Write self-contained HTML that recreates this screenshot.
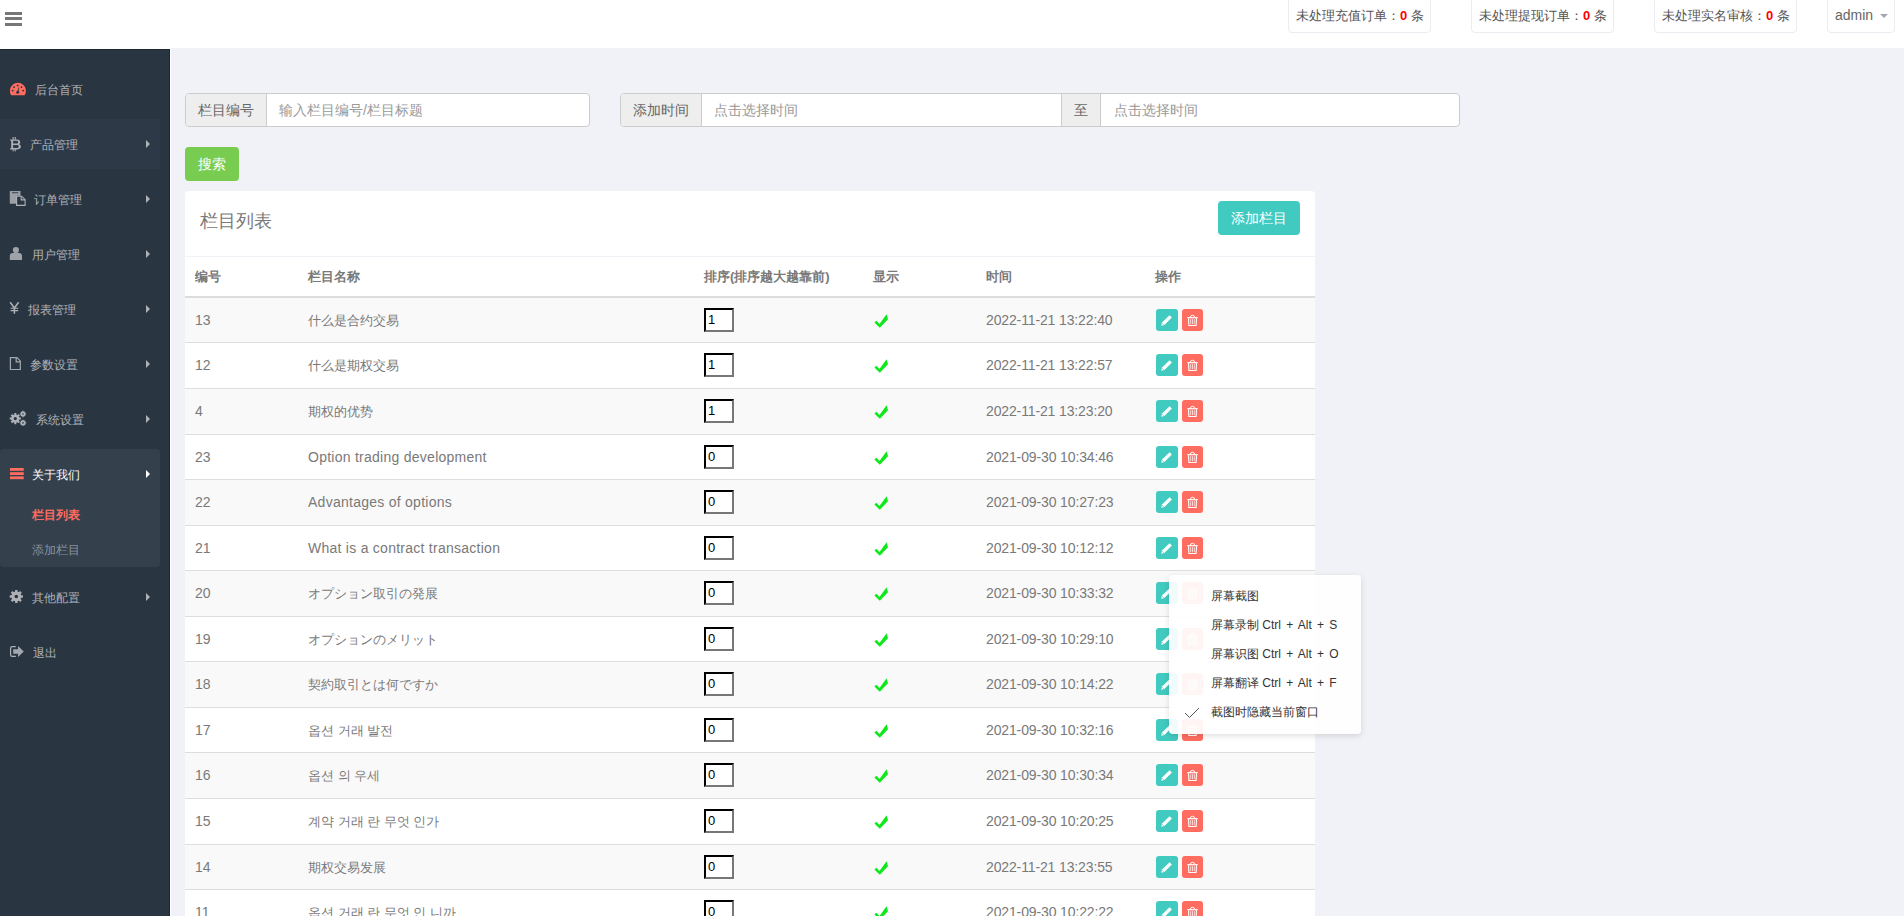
<!DOCTYPE html>
<html><head><meta charset="utf-8">
<style>
*{box-sizing:border-box}
html,body{margin:0;padding:0}
body{width:1904px;height:916px;overflow:hidden;position:relative;background:#f1f2f7;font-family:"Liberation Sans",sans-serif;color:#797979;font-size:14px}
.abs{position:absolute}
#hdr{position:absolute;left:0;top:0;width:1904px;height:48px;background:#fff}
.bar{position:absolute;left:5px;width:17px;height:3px;background:#777}
.stat{position:absolute;top:-5px;height:38px;border:1px solid #ebebf2;border-radius:4px;background:#fff;font-size:13px;color:#555;white-space:nowrap}
.stat span.t{position:absolute;left:7px;top:13px;line-height:14px}
.stat b{color:#f00;font-weight:bold}
#side{position:absolute;left:0;top:49px;width:170px;height:867px;background:#2a3542;border-top:1px solid #1e2833;border-right:1px solid #1e2833}
#wl{position:absolute;left:170px;top:48px;width:1px;height:868px;background:#fff}
.mi{position:absolute;left:0;width:160px;height:49px;color:#aeb2b7;font-size:12px;white-space:nowrap}
.mi .tx{position:absolute;top:20px;line-height:13px}
.mi .ar{position:absolute;left:146px;top:21px;width:0;height:0;border-left:4.4px solid #aeb2b7;border-top:4px solid transparent;border-bottom:4px solid transparent}
.mi svg{position:absolute}
.ig{position:absolute;top:93px;height:34px;border:1px solid #cccccc;border-radius:4px;background:#fff;font-size:14px;white-space:nowrap}
.addon{position:absolute;top:0;height:32px;background:#eee;color:#666;line-height:32px;text-align:center}
.ph{position:absolute;top:0;line-height:32px;color:#999}
.btn{position:absolute;height:34px;border-radius:4px;color:#fff;font-size:14px;line-height:34px;text-align:center}
#panel{position:absolute;left:185px;top:191px;width:1130px;height:800px;background:#fff;border-radius:4px}
.th{position:absolute;top:79px;font-weight:bold;font-size:13px;line-height:14px;color:#797979}
.tr{position:absolute;left:0;width:1130px;height:45.58px}
.stripe{position:absolute;left:0;width:1130px}
.hl{position:absolute;left:0;width:1130px;height:1px;background:#ddd}
.td{position:absolute;top:13px;line-height:18px;white-space:nowrap}
.sort{position:absolute;left:519px;top:10px;width:29.5px;height:23.5px;border:2px inset #767676;border-top-color:#000;border-left-color:#000;border-right-color:#777;border-bottom-color:#777;background:#fff;color:#000;font-size:13px;line-height:19px;padding-left:2px}
.chk{position:absolute;left:689px;top:16px;width:15px;height:14px}
.chk svg{display:block}
.be,.bd{position:absolute;top:11px;height:22px;border-radius:3px}
.be{left:971px;width:22px;background:#41cac0}
.bd{left:997px;width:21px;background:#ff6c60}
.be svg,.bd svg{position:absolute;left:0;top:0}
#cm{position:absolute;left:1169px;top:575px;width:192px;height:159px;background:rgba(255,255,255,0.93);border-radius:4px;box-shadow:0 2px 6px rgba(0,0,0,0.13);font-size:12px;color:#333;white-space:nowrap}
#cm .it{position:absolute;left:42px;line-height:14px}
#cm .it i{font-style:normal;word-spacing:1.9px}
</style></head><body>
<div id="hdr">
 <div class="bar" style="top:12px"></div><div class="bar" style="top:17px"></div><div class="bar" style="top:23px"></div>
 <div class="stat" style="left:1288px;width:143px"><span class="t">未处理充值订单：<b>0</b> 条</span></div>
 <div class="stat" style="left:1471px;width:143px"><span class="t">未处理提现订单：<b>0</b> 条</span></div>
 <div class="stat" style="left:1654px;width:143px"><span class="t">未处理实名审核：<b>0</b> 条</span></div>
 <div class="stat" style="left:1827px;width:68px"><span class="t" style="font-size:14px;top:12px;color:#666">admin</span><span class="abs" style="left:52px;top:18px;width:0;height:0;border-top:4px solid #a4a7b0;border-left:4px solid transparent;border-right:4px solid transparent"></span></div>
</div>
<div id="wl"></div><div class="abs" style="left:0;top:48px;width:171px;height:1px;background:#fff"></div>
<div id="side">
 <!-- items -->
 <div class="mi" style="top:14px"><span class="tx" style="left:35px">后台首页</span></div>
 <div class="mi" style="top:69px;height:50px;background:#2e3947"><span class="tx" style="left:30px">产品管理</span><span class="ar"></span></div>
 <div class="mi" style="top:124px"><span class="tx" style="left:34px">订单管理</span><span class="ar"></span></div>
 <div class="mi" style="top:179px"><span class="tx" style="left:32px">用户管理</span><span class="ar"></span></div>
 <div class="mi" style="top:234px"><span class="tx" style="left:28px">报表管理</span><span class="ar"></span></div>
 <div class="mi" style="top:289px"><span class="tx" style="left:30px">参数设置</span><span class="ar"></span></div>
 <div class="mi" style="top:344px"><span class="tx" style="left:36px">系统设置</span><span class="ar"></span></div>
 <div class="abs" style="left:0;top:399px;width:160px;height:118px;background:#35404d;border-radius:4px"></div>
 <div class="mi" style="top:399px;color:#fff"><span class="tx" style="left:32px">关于我们</span><span class="ar" style="border-left-color:#fff"></span></div>
 <div class="mi" style="top:447px;height:35px;color:#ff6c60"><span class="tx" style="left:32px;top:12px;font-weight:bold">栏目列表</span></div>
 <div class="mi" style="top:482px;height:35px;color:#8a9099"><span class="tx" style="left:32px;top:12px">添加栏目</span></div>
 <div class="mi" style="top:522px"><span class="tx" style="left:32px">其他配置</span><span class="ar"></span></div>
 <div class="mi" style="top:577px"><span class="tx" style="left:33px">退出</span></div>
</div>
<svg class="abs" style="left:0;top:0" width="170" height="700" viewBox="0 0 170 700">
 <!-- dashboard -->
 <path d="M11.2 95.2 A8 8 0 1 1 24.6 95.2 Z" fill="#ff6c60"/>
 <g fill="#2a3542"><circle cx="12.6" cy="90.6" r="0.95"/><circle cx="14.1" cy="87.1" r="0.95"/><circle cx="17.7" cy="85.4" r="0.95"/><circle cx="21.5" cy="87.1" r="0.95"/><circle cx="23.2" cy="90.6" r="0.95"/><circle cx="17.7" cy="92.3" r="1.5"/><path d="M17.1 92.2 L18.6 87.4 L19.2 87.6 L18.3 92.4 Z"/></g>
 <!-- bitcoin -->
 <g fill="#aeb2b7"><path d="M10 139.4 H16.8 C19.6 139.4 20.2 141 20.2 142.2 C20.2 143.3 19.5 143.9 18.8 144.2 C19.9 144.5 20.9 145.3 20.9 146.6 C20.9 148.2 19.8 149.4 17.2 149.4 H10 V148.3 H11.2 V140.5 H10 Z M13.1 140.8 V143.6 H16.5 C17.8 143.6 18.2 143 18.2 142.2 C18.2 141.4 17.8 140.8 16.5 140.8 Z M13.1 145 V148 H16.8 C18.2 148 18.8 147.3 18.8 146.5 C18.8 145.6 18.2 145 16.8 145 Z"/><rect x="12.6" y="137" width="1.1" height="2.6"/><rect x="14.7" y="137" width="1.1" height="2.6"/><rect x="12.6" y="149.2" width="1.1" height="2.1"/><rect x="14.7" y="149.2" width="1.1" height="2.1"/></g>
 <!-- files-o -->
 <path d="M9.8 191 H20.5 V196 L16.8 195.6 L16.8 203.8 H9.8 Z" fill="#9ba0a7"/>
 <rect x="12" y="192.3" width="6.2" height="0.9" fill="#2a3542"/>
 <path d="M16.6 196.2 H21.6 L25.1 199.7 V205.4 H16.6 Z" fill="none" stroke="#aeb2b7" stroke-width="1.1"/>
 <path d="M21.2 196.3 V199.9 H25" fill="none" stroke="#aeb2b7" stroke-width="1.1"/>
 <!-- user -->
 <g fill="#9ea3aa"><circle cx="15.9" cy="250" r="3.1"/><path d="M9.8 260 V256 C9.8 254 11 253 12.6 253 H19.2 C20.8 253 22 254 22 256 V260 Z"/></g>
 <!-- yen -->
 <g fill="none" stroke="#aeb2b7" stroke-width="1.5"><path d="M10.2 302.2 L14.4 308 L18.6 302.2"/><path d="M14.4 307.5 V313.8"/><path d="M10.6 308.3 H18.2 M10.6 310.6 H18.2" stroke-width="1.1"/></g>
 <!-- file-o -->
 <path d="M10.4 357.6 H17 L20.3 360.9 V369.5 H10.4 Z" fill="none" stroke="#a3a8ae" stroke-width="1.2"/>
 <path d="M16.2 357.8 V361.8 H20.2" fill="none" stroke="#a3a8ae" stroke-width="1.2"/>
 <!-- cogs -->
 <g fill="#aeb2b7">
  <circle cx="15.3" cy="418.6" r="4.2"/>
  <g stroke="#aeb2b7" stroke-width="2"><path d="M15.3 413 V424.2 M9.7 418.6 H20.9 M11.4 414.7 L19.2 422.5 M19.2 414.7 L11.4 422.5"/></g>
  <circle cx="23" cy="414" r="2.4"/><g stroke="#aeb2b7" stroke-width="1.2"><path d="M23 410.8 V417.2 M19.8 414 H26.2 M20.8 411.8 L25.2 416.2 M25.2 411.8 L20.8 416.2"/></g>
  <circle cx="23" cy="422.9" r="2.4"/><g stroke="#aeb2b7" stroke-width="1.2"><path d="M23 419.7 V426.1 M19.8 422.9 H26.2 M20.8 420.7 L25.2 425.1 M25.2 420.7 L20.8 425.1"/></g>
 </g>
 <g fill="#2a3542"><circle cx="15.3" cy="418.6" r="1.6"/><circle cx="23" cy="414" r="0.8"/><circle cx="23" cy="422.9" r="0.8"/></g>
 <!-- bars red -->
 <g fill="#ff6c60"><rect x="10" y="468" width="13.7" height="2.8"/><rect x="10" y="472.2" width="13.7" height="2.8"/><rect x="10" y="476.4" width="13.7" height="2.8"/></g>
 <!-- cog -->
 <circle cx="16.3" cy="596.5" r="4.9" fill="#aeb2b7"/>
 <g stroke="#aeb2b7" stroke-width="2.4"><path d="M16.3 589.9 V603.1 M9.7 596.5 H22.9 M11.6 591.8 L21 601.2 M21 591.8 L11.6 601.2"/></g>
 <circle cx="16.3" cy="596.5" r="1.8" fill="#2a3542"/>
 <!-- sign-out -->
 <path d="M15.8 646.6 H12.2 C11 646.6 10.6 647.4 10.6 648.4 V654.8 C10.6 655.8 11 656.4 12.2 656.4 H15.8" fill="none" stroke="#aeb2b7" stroke-width="1.2"/>
 <path d="M13.2 649.2 H18 V646 L23.8 651.5 L18 657 V653.8 H13.2 Z" fill="#a3a8ae"/>
</svg>
<div class="ig" style="left:185px;width:405px">
 <div class="addon" style="left:0;width:81px;border-right:1px solid #cccccc;border-radius:3px 0 0 3px">栏目编号</div>
 <div class="ph" style="left:93px">输入栏目编号/栏目标题</div>
</div>
<div class="ig" style="left:620px;width:840px">
 <div class="addon" style="left:0;width:81px;border-right:1px solid #cccccc;border-radius:3px 0 0 3px">添加时间</div>
 <div class="ph" style="left:93px">点击选择时间</div>
 <div class="addon" style="left:440px;width:40px;border-left:1px solid #cccccc;border-right:1px solid #cccccc">至</div>
 <div class="ph" style="left:493px">点击选择时间</div>
</div>
<div class="btn" style="left:185px;top:147px;width:54px;background:#78cd51">搜索</div>
<div id="panel">
 <div class="abs" style="left:15px;top:20px;font-size:18px;line-height:20px;color:#797979">栏目列表</div>
 <div class="btn" style="left:1033px;top:10px;width:82px;background:#41cac0">添加栏目</div>
 <div class="abs" style="left:0;top:65px;width:1130px;height:1px;background:#eff2f7"></div>
 <div class="th" style="left:10px">编号</div>
 <div class="th" style="left:123px">栏目名称</div>
 <div class="th" style="left:519px">排序(排序越大越靠前)</div>
 <div class="th" style="left:688px">显示</div>
 <div class="th" style="left:801px">时间</div>
 <div class="th" style="left:970px">操作</div>
 <div class="abs" style="left:0;top:105px;width:1130px;height:2px;background:#ddd"></div>
</div>
<div class="abs" style="left:185px;top:0;width:1130px;height:916px">
<div class="stripe" style="top:298px;height:44px;background:#f9f9f9"></div><div class="hl" style="top:342px"></div>
<div class="stripe" style="top:343px;height:45px;background:#fff"></div><div class="hl" style="top:388px"></div>
<div class="stripe" style="top:389px;height:45px;background:#f9f9f9"></div><div class="hl" style="top:434px"></div>
<div class="stripe" style="top:435px;height:44px;background:#fff"></div><div class="hl" style="top:479px"></div>
<div class="stripe" style="top:480px;height:45px;background:#f9f9f9"></div><div class="hl" style="top:525px"></div>
<div class="stripe" style="top:526px;height:44px;background:#fff"></div><div class="hl" style="top:570px"></div>
<div class="stripe" style="top:571px;height:45px;background:#f9f9f9"></div><div class="hl" style="top:616px"></div>
<div class="stripe" style="top:617px;height:44px;background:#fff"></div><div class="hl" style="top:661px"></div>
<div class="stripe" style="top:662px;height:45px;background:#f9f9f9"></div><div class="hl" style="top:707px"></div>
<div class="stripe" style="top:708px;height:44px;background:#fff"></div><div class="hl" style="top:752px"></div>
<div class="stripe" style="top:753px;height:45px;background:#f9f9f9"></div><div class="hl" style="top:798px"></div>
<div class="stripe" style="top:799px;height:45px;background:#fff"></div><div class="hl" style="top:844px"></div>
<div class="stripe" style="top:845px;height:44px;background:#f9f9f9"></div><div class="hl" style="top:889px"></div>
<div class="stripe" style="top:890px;height:45px;background:#fff"></div><div class="hl" style="top:935px"></div>
<div class="tr" style="top:298.00px">
<div class="td" style="left:10px">13</div>
<div class="td" style="left:123px;font-size:13px;top:14px">什么是合约交易</div>
<div class="sort">1</div>
<div class="chk"><svg width="15" height="14" viewBox="0 0 15 14"><path d="M0.4 8.6 L2.4 6.8 L5.5 9.9 L12.6 0.3 L14 5.3 L5.8 13.8 Z" fill="#0de81a"/></svg></div>
<div class="td" style="left:801px;letter-spacing:-0.13px">2022-11-21 13:22:40</div>
<div class="be"><svg width="22" height="22" viewBox="0 0 22 22"><path d="M5.3 16.7 L6 13.6 L13.6 6.2 L15.9 8.6 L8.4 16.1 Z" fill="#fff"/><path d="M6.3 14.2 L7.9 15.8" stroke="#41cac0" stroke-width="0.7"/><path d="M11.9 7.9 L14.2 10.2" stroke="#e6f7f6" stroke-width="0.5"/></svg></div><div class="bd"><svg width="21" height="22" viewBox="0 0 21 22"><g fill="none" stroke="#fff"><path d="M5.3 8.7 H15.7" stroke-width="1.2"/><path d="M8.4 8.2 Q8.4 6.3 10.5 6.3 Q12.6 6.3 12.6 8.2" stroke-width="1"/><path d="M6.5 9.2 L6.9 16.5 H14.1 L14.5 9.2" stroke-width="1.1"/><path d="M8.7 10.2 V15.2 M10.5 10.2 V15.2 M12.3 10.2 V15.2" stroke-width="0.85" stroke-opacity="0.85"/></g></svg></div>
</div>
<div class="tr" style="top:343.00px">
<div class="td" style="left:10px">12</div>
<div class="td" style="left:123px;font-size:13px;top:14px">什么是期权交易</div>
<div class="sort">1</div>
<div class="chk"><svg width="15" height="14" viewBox="0 0 15 14"><path d="M0.4 8.6 L2.4 6.8 L5.5 9.9 L12.6 0.3 L14 5.3 L5.8 13.8 Z" fill="#0de81a"/></svg></div>
<div class="td" style="left:801px;letter-spacing:-0.13px">2022-11-21 13:22:57</div>
<div class="be"><svg width="22" height="22" viewBox="0 0 22 22"><path d="M5.3 16.7 L6 13.6 L13.6 6.2 L15.9 8.6 L8.4 16.1 Z" fill="#fff"/><path d="M6.3 14.2 L7.9 15.8" stroke="#41cac0" stroke-width="0.7"/><path d="M11.9 7.9 L14.2 10.2" stroke="#e6f7f6" stroke-width="0.5"/></svg></div><div class="bd"><svg width="21" height="22" viewBox="0 0 21 22"><g fill="none" stroke="#fff"><path d="M5.3 8.7 H15.7" stroke-width="1.2"/><path d="M8.4 8.2 Q8.4 6.3 10.5 6.3 Q12.6 6.3 12.6 8.2" stroke-width="1"/><path d="M6.5 9.2 L6.9 16.5 H14.1 L14.5 9.2" stroke-width="1.1"/><path d="M8.7 10.2 V15.2 M10.5 10.2 V15.2 M12.3 10.2 V15.2" stroke-width="0.85" stroke-opacity="0.85"/></g></svg></div>
</div>
<div class="tr" style="top:389.00px">
<div class="td" style="left:10px">4</div>
<div class="td" style="left:123px;font-size:13px;top:14px">期权的优势</div>
<div class="sort">1</div>
<div class="chk"><svg width="15" height="14" viewBox="0 0 15 14"><path d="M0.4 8.6 L2.4 6.8 L5.5 9.9 L12.6 0.3 L14 5.3 L5.8 13.8 Z" fill="#0de81a"/></svg></div>
<div class="td" style="left:801px;letter-spacing:-0.13px">2022-11-21 13:23:20</div>
<div class="be"><svg width="22" height="22" viewBox="0 0 22 22"><path d="M5.3 16.7 L6 13.6 L13.6 6.2 L15.9 8.6 L8.4 16.1 Z" fill="#fff"/><path d="M6.3 14.2 L7.9 15.8" stroke="#41cac0" stroke-width="0.7"/><path d="M11.9 7.9 L14.2 10.2" stroke="#e6f7f6" stroke-width="0.5"/></svg></div><div class="bd"><svg width="21" height="22" viewBox="0 0 21 22"><g fill="none" stroke="#fff"><path d="M5.3 8.7 H15.7" stroke-width="1.2"/><path d="M8.4 8.2 Q8.4 6.3 10.5 6.3 Q12.6 6.3 12.6 8.2" stroke-width="1"/><path d="M6.5 9.2 L6.9 16.5 H14.1 L14.5 9.2" stroke-width="1.1"/><path d="M8.7 10.2 V15.2 M10.5 10.2 V15.2 M12.3 10.2 V15.2" stroke-width="0.85" stroke-opacity="0.85"/></g></svg></div>
</div>
<div class="tr" style="top:435.00px">
<div class="td" style="left:10px">23</div>
<div class="td" style="left:123px;letter-spacing:0.26px">Option trading development</div>
<div class="sort">0</div>
<div class="chk"><svg width="15" height="14" viewBox="0 0 15 14"><path d="M0.4 8.6 L2.4 6.8 L5.5 9.9 L12.6 0.3 L14 5.3 L5.8 13.8 Z" fill="#0de81a"/></svg></div>
<div class="td" style="left:801px;letter-spacing:-0.13px">2021-09-30 10:34:46</div>
<div class="be"><svg width="22" height="22" viewBox="0 0 22 22"><path d="M5.3 16.7 L6 13.6 L13.6 6.2 L15.9 8.6 L8.4 16.1 Z" fill="#fff"/><path d="M6.3 14.2 L7.9 15.8" stroke="#41cac0" stroke-width="0.7"/><path d="M11.9 7.9 L14.2 10.2" stroke="#e6f7f6" stroke-width="0.5"/></svg></div><div class="bd"><svg width="21" height="22" viewBox="0 0 21 22"><g fill="none" stroke="#fff"><path d="M5.3 8.7 H15.7" stroke-width="1.2"/><path d="M8.4 8.2 Q8.4 6.3 10.5 6.3 Q12.6 6.3 12.6 8.2" stroke-width="1"/><path d="M6.5 9.2 L6.9 16.5 H14.1 L14.5 9.2" stroke-width="1.1"/><path d="M8.7 10.2 V15.2 M10.5 10.2 V15.2 M12.3 10.2 V15.2" stroke-width="0.85" stroke-opacity="0.85"/></g></svg></div>
</div>
<div class="tr" style="top:480.00px">
<div class="td" style="left:10px">22</div>
<div class="td" style="left:123px;letter-spacing:0.26px">Advantages of options</div>
<div class="sort">0</div>
<div class="chk"><svg width="15" height="14" viewBox="0 0 15 14"><path d="M0.4 8.6 L2.4 6.8 L5.5 9.9 L12.6 0.3 L14 5.3 L5.8 13.8 Z" fill="#0de81a"/></svg></div>
<div class="td" style="left:801px;letter-spacing:-0.13px">2021-09-30 10:27:23</div>
<div class="be"><svg width="22" height="22" viewBox="0 0 22 22"><path d="M5.3 16.7 L6 13.6 L13.6 6.2 L15.9 8.6 L8.4 16.1 Z" fill="#fff"/><path d="M6.3 14.2 L7.9 15.8" stroke="#41cac0" stroke-width="0.7"/><path d="M11.9 7.9 L14.2 10.2" stroke="#e6f7f6" stroke-width="0.5"/></svg></div><div class="bd"><svg width="21" height="22" viewBox="0 0 21 22"><g fill="none" stroke="#fff"><path d="M5.3 8.7 H15.7" stroke-width="1.2"/><path d="M8.4 8.2 Q8.4 6.3 10.5 6.3 Q12.6 6.3 12.6 8.2" stroke-width="1"/><path d="M6.5 9.2 L6.9 16.5 H14.1 L14.5 9.2" stroke-width="1.1"/><path d="M8.7 10.2 V15.2 M10.5 10.2 V15.2 M12.3 10.2 V15.2" stroke-width="0.85" stroke-opacity="0.85"/></g></svg></div>
</div>
<div class="tr" style="top:526.00px">
<div class="td" style="left:10px">21</div>
<div class="td" style="left:123px;letter-spacing:0.26px">What is a contract transaction</div>
<div class="sort">0</div>
<div class="chk"><svg width="15" height="14" viewBox="0 0 15 14"><path d="M0.4 8.6 L2.4 6.8 L5.5 9.9 L12.6 0.3 L14 5.3 L5.8 13.8 Z" fill="#0de81a"/></svg></div>
<div class="td" style="left:801px;letter-spacing:-0.13px">2021-09-30 10:12:12</div>
<div class="be"><svg width="22" height="22" viewBox="0 0 22 22"><path d="M5.3 16.7 L6 13.6 L13.6 6.2 L15.9 8.6 L8.4 16.1 Z" fill="#fff"/><path d="M6.3 14.2 L7.9 15.8" stroke="#41cac0" stroke-width="0.7"/><path d="M11.9 7.9 L14.2 10.2" stroke="#e6f7f6" stroke-width="0.5"/></svg></div><div class="bd"><svg width="21" height="22" viewBox="0 0 21 22"><g fill="none" stroke="#fff"><path d="M5.3 8.7 H15.7" stroke-width="1.2"/><path d="M8.4 8.2 Q8.4 6.3 10.5 6.3 Q12.6 6.3 12.6 8.2" stroke-width="1"/><path d="M6.5 9.2 L6.9 16.5 H14.1 L14.5 9.2" stroke-width="1.1"/><path d="M8.7 10.2 V15.2 M10.5 10.2 V15.2 M12.3 10.2 V15.2" stroke-width="0.85" stroke-opacity="0.85"/></g></svg></div>
</div>
<div class="tr" style="top:571.00px">
<div class="td" style="left:10px">20</div>
<div class="td" style="left:123px;font-size:13px;top:14px">オプション取引の発展</div>
<div class="sort">0</div>
<div class="chk"><svg width="15" height="14" viewBox="0 0 15 14"><path d="M0.4 8.6 L2.4 6.8 L5.5 9.9 L12.6 0.3 L14 5.3 L5.8 13.8 Z" fill="#0de81a"/></svg></div>
<div class="td" style="left:801px;letter-spacing:-0.13px">2021-09-30 10:33:32</div>
<div class="be"><svg width="22" height="22" viewBox="0 0 22 22"><path d="M5.3 16.7 L6 13.6 L13.6 6.2 L15.9 8.6 L8.4 16.1 Z" fill="#fff"/><path d="M6.3 14.2 L7.9 15.8" stroke="#41cac0" stroke-width="0.7"/><path d="M11.9 7.9 L14.2 10.2" stroke="#e6f7f6" stroke-width="0.5"/></svg></div><div class="bd"><svg width="21" height="22" viewBox="0 0 21 22"><g fill="none" stroke="#fff"><path d="M5.3 8.7 H15.7" stroke-width="1.2"/><path d="M8.4 8.2 Q8.4 6.3 10.5 6.3 Q12.6 6.3 12.6 8.2" stroke-width="1"/><path d="M6.5 9.2 L6.9 16.5 H14.1 L14.5 9.2" stroke-width="1.1"/><path d="M8.7 10.2 V15.2 M10.5 10.2 V15.2 M12.3 10.2 V15.2" stroke-width="0.85" stroke-opacity="0.85"/></g></svg></div>
</div>
<div class="tr" style="top:617.00px">
<div class="td" style="left:10px">19</div>
<div class="td" style="left:123px;font-size:13px;top:14px">オプションのメリット</div>
<div class="sort">0</div>
<div class="chk"><svg width="15" height="14" viewBox="0 0 15 14"><path d="M0.4 8.6 L2.4 6.8 L5.5 9.9 L12.6 0.3 L14 5.3 L5.8 13.8 Z" fill="#0de81a"/></svg></div>
<div class="td" style="left:801px;letter-spacing:-0.13px">2021-09-30 10:29:10</div>
<div class="be"><svg width="22" height="22" viewBox="0 0 22 22"><path d="M5.3 16.7 L6 13.6 L13.6 6.2 L15.9 8.6 L8.4 16.1 Z" fill="#fff"/><path d="M6.3 14.2 L7.9 15.8" stroke="#41cac0" stroke-width="0.7"/><path d="M11.9 7.9 L14.2 10.2" stroke="#e6f7f6" stroke-width="0.5"/></svg></div><div class="bd"><svg width="21" height="22" viewBox="0 0 21 22"><g fill="none" stroke="#fff"><path d="M5.3 8.7 H15.7" stroke-width="1.2"/><path d="M8.4 8.2 Q8.4 6.3 10.5 6.3 Q12.6 6.3 12.6 8.2" stroke-width="1"/><path d="M6.5 9.2 L6.9 16.5 H14.1 L14.5 9.2" stroke-width="1.1"/><path d="M8.7 10.2 V15.2 M10.5 10.2 V15.2 M12.3 10.2 V15.2" stroke-width="0.85" stroke-opacity="0.85"/></g></svg></div>
</div>
<div class="tr" style="top:662.00px">
<div class="td" style="left:10px">18</div>
<div class="td" style="left:123px;font-size:13px;top:14px">契約取引とは何ですか</div>
<div class="sort">0</div>
<div class="chk"><svg width="15" height="14" viewBox="0 0 15 14"><path d="M0.4 8.6 L2.4 6.8 L5.5 9.9 L12.6 0.3 L14 5.3 L5.8 13.8 Z" fill="#0de81a"/></svg></div>
<div class="td" style="left:801px;letter-spacing:-0.13px">2021-09-30 10:14:22</div>
<div class="be"><svg width="22" height="22" viewBox="0 0 22 22"><path d="M5.3 16.7 L6 13.6 L13.6 6.2 L15.9 8.6 L8.4 16.1 Z" fill="#fff"/><path d="M6.3 14.2 L7.9 15.8" stroke="#41cac0" stroke-width="0.7"/><path d="M11.9 7.9 L14.2 10.2" stroke="#e6f7f6" stroke-width="0.5"/></svg></div><div class="bd"><svg width="21" height="22" viewBox="0 0 21 22"><g fill="none" stroke="#fff"><path d="M5.3 8.7 H15.7" stroke-width="1.2"/><path d="M8.4 8.2 Q8.4 6.3 10.5 6.3 Q12.6 6.3 12.6 8.2" stroke-width="1"/><path d="M6.5 9.2 L6.9 16.5 H14.1 L14.5 9.2" stroke-width="1.1"/><path d="M8.7 10.2 V15.2 M10.5 10.2 V15.2 M12.3 10.2 V15.2" stroke-width="0.85" stroke-opacity="0.85"/></g></svg></div>
</div>
<div class="tr" style="top:708.00px">
<div class="td" style="left:10px">17</div>
<div class="td" style="left:123px;font-size:13px;top:14px">옵션 거래 발전</div>
<div class="sort">0</div>
<div class="chk"><svg width="15" height="14" viewBox="0 0 15 14"><path d="M0.4 8.6 L2.4 6.8 L5.5 9.9 L12.6 0.3 L14 5.3 L5.8 13.8 Z" fill="#0de81a"/></svg></div>
<div class="td" style="left:801px;letter-spacing:-0.13px">2021-09-30 10:32:16</div>
<div class="be"><svg width="22" height="22" viewBox="0 0 22 22"><path d="M5.3 16.7 L6 13.6 L13.6 6.2 L15.9 8.6 L8.4 16.1 Z" fill="#fff"/><path d="M6.3 14.2 L7.9 15.8" stroke="#41cac0" stroke-width="0.7"/><path d="M11.9 7.9 L14.2 10.2" stroke="#e6f7f6" stroke-width="0.5"/></svg></div><div class="bd"><svg width="21" height="22" viewBox="0 0 21 22"><g fill="none" stroke="#fff"><path d="M5.3 8.7 H15.7" stroke-width="1.2"/><path d="M8.4 8.2 Q8.4 6.3 10.5 6.3 Q12.6 6.3 12.6 8.2" stroke-width="1"/><path d="M6.5 9.2 L6.9 16.5 H14.1 L14.5 9.2" stroke-width="1.1"/><path d="M8.7 10.2 V15.2 M10.5 10.2 V15.2 M12.3 10.2 V15.2" stroke-width="0.85" stroke-opacity="0.85"/></g></svg></div>
</div>
<div class="tr" style="top:753.00px">
<div class="td" style="left:10px">16</div>
<div class="td" style="left:123px;font-size:13px;top:14px">옵션 의 우세</div>
<div class="sort">0</div>
<div class="chk"><svg width="15" height="14" viewBox="0 0 15 14"><path d="M0.4 8.6 L2.4 6.8 L5.5 9.9 L12.6 0.3 L14 5.3 L5.8 13.8 Z" fill="#0de81a"/></svg></div>
<div class="td" style="left:801px;letter-spacing:-0.13px">2021-09-30 10:30:34</div>
<div class="be"><svg width="22" height="22" viewBox="0 0 22 22"><path d="M5.3 16.7 L6 13.6 L13.6 6.2 L15.9 8.6 L8.4 16.1 Z" fill="#fff"/><path d="M6.3 14.2 L7.9 15.8" stroke="#41cac0" stroke-width="0.7"/><path d="M11.9 7.9 L14.2 10.2" stroke="#e6f7f6" stroke-width="0.5"/></svg></div><div class="bd"><svg width="21" height="22" viewBox="0 0 21 22"><g fill="none" stroke="#fff"><path d="M5.3 8.7 H15.7" stroke-width="1.2"/><path d="M8.4 8.2 Q8.4 6.3 10.5 6.3 Q12.6 6.3 12.6 8.2" stroke-width="1"/><path d="M6.5 9.2 L6.9 16.5 H14.1 L14.5 9.2" stroke-width="1.1"/><path d="M8.7 10.2 V15.2 M10.5 10.2 V15.2 M12.3 10.2 V15.2" stroke-width="0.85" stroke-opacity="0.85"/></g></svg></div>
</div>
<div class="tr" style="top:799.00px">
<div class="td" style="left:10px">15</div>
<div class="td" style="left:123px;font-size:13px;top:14px">계약 거래 란 무엇 인가</div>
<div class="sort">0</div>
<div class="chk"><svg width="15" height="14" viewBox="0 0 15 14"><path d="M0.4 8.6 L2.4 6.8 L5.5 9.9 L12.6 0.3 L14 5.3 L5.8 13.8 Z" fill="#0de81a"/></svg></div>
<div class="td" style="left:801px;letter-spacing:-0.13px">2021-09-30 10:20:25</div>
<div class="be"><svg width="22" height="22" viewBox="0 0 22 22"><path d="M5.3 16.7 L6 13.6 L13.6 6.2 L15.9 8.6 L8.4 16.1 Z" fill="#fff"/><path d="M6.3 14.2 L7.9 15.8" stroke="#41cac0" stroke-width="0.7"/><path d="M11.9 7.9 L14.2 10.2" stroke="#e6f7f6" stroke-width="0.5"/></svg></div><div class="bd"><svg width="21" height="22" viewBox="0 0 21 22"><g fill="none" stroke="#fff"><path d="M5.3 8.7 H15.7" stroke-width="1.2"/><path d="M8.4 8.2 Q8.4 6.3 10.5 6.3 Q12.6 6.3 12.6 8.2" stroke-width="1"/><path d="M6.5 9.2 L6.9 16.5 H14.1 L14.5 9.2" stroke-width="1.1"/><path d="M8.7 10.2 V15.2 M10.5 10.2 V15.2 M12.3 10.2 V15.2" stroke-width="0.85" stroke-opacity="0.85"/></g></svg></div>
</div>
<div class="tr" style="top:845.00px">
<div class="td" style="left:10px">14</div>
<div class="td" style="left:123px;font-size:13px;top:14px">期权交易发展</div>
<div class="sort">0</div>
<div class="chk"><svg width="15" height="14" viewBox="0 0 15 14"><path d="M0.4 8.6 L2.4 6.8 L5.5 9.9 L12.6 0.3 L14 5.3 L5.8 13.8 Z" fill="#0de81a"/></svg></div>
<div class="td" style="left:801px;letter-spacing:-0.13px">2022-11-21 13:23:55</div>
<div class="be"><svg width="22" height="22" viewBox="0 0 22 22"><path d="M5.3 16.7 L6 13.6 L13.6 6.2 L15.9 8.6 L8.4 16.1 Z" fill="#fff"/><path d="M6.3 14.2 L7.9 15.8" stroke="#41cac0" stroke-width="0.7"/><path d="M11.9 7.9 L14.2 10.2" stroke="#e6f7f6" stroke-width="0.5"/></svg></div><div class="bd"><svg width="21" height="22" viewBox="0 0 21 22"><g fill="none" stroke="#fff"><path d="M5.3 8.7 H15.7" stroke-width="1.2"/><path d="M8.4 8.2 Q8.4 6.3 10.5 6.3 Q12.6 6.3 12.6 8.2" stroke-width="1"/><path d="M6.5 9.2 L6.9 16.5 H14.1 L14.5 9.2" stroke-width="1.1"/><path d="M8.7 10.2 V15.2 M10.5 10.2 V15.2 M12.3 10.2 V15.2" stroke-width="0.85" stroke-opacity="0.85"/></g></svg></div>
</div>
<div class="tr" style="top:890.00px">
<div class="td" style="left:10px">11</div>
<div class="td" style="left:123px;font-size:13px;top:14px">옵션 거래 란 무엇 인 니까</div>
<div class="sort">0</div>
<div class="chk"><svg width="15" height="14" viewBox="0 0 15 14"><path d="M0.4 8.6 L2.4 6.8 L5.5 9.9 L12.6 0.3 L14 5.3 L5.8 13.8 Z" fill="#0de81a"/></svg></div>
<div class="td" style="left:801px;letter-spacing:-0.13px">2021-09-30 10:22:22</div>
<div class="be"><svg width="22" height="22" viewBox="0 0 22 22"><path d="M5.3 16.7 L6 13.6 L13.6 6.2 L15.9 8.6 L8.4 16.1 Z" fill="#fff"/><path d="M6.3 14.2 L7.9 15.8" stroke="#41cac0" stroke-width="0.7"/><path d="M11.9 7.9 L14.2 10.2" stroke="#e6f7f6" stroke-width="0.5"/></svg></div><div class="bd"><svg width="21" height="22" viewBox="0 0 21 22"><g fill="none" stroke="#fff"><path d="M5.3 8.7 H15.7" stroke-width="1.2"/><path d="M8.4 8.2 Q8.4 6.3 10.5 6.3 Q12.6 6.3 12.6 8.2" stroke-width="1"/><path d="M6.5 9.2 L6.9 16.5 H14.1 L14.5 9.2" stroke-width="1.1"/><path d="M8.7 10.2 V15.2 M10.5 10.2 V15.2 M12.3 10.2 V15.2" stroke-width="0.85" stroke-opacity="0.85"/></g></svg></div>
</div>
</div>
<div id="cm">
 <div class="it" style="top:14px">屏幕截图</div>
 <div class="it" style="top:43px">屏幕录制 <i>Ctrl + Alt + S</i></div>
 <div class="it" style="top:72px">屏幕识图 <i>Ctrl + Alt + O</i></div>
 <div class="it" style="top:101px">屏幕翻译 <i>Ctrl + Alt + F</i></div>
 <div class="it" style="top:130px">截图时隐藏当前窗口</div>
 <svg class="abs" style="left:15px;top:132px" width="16" height="12" viewBox="0 0 16 12"><path d="M1 6 L5.5 10.5 L15 1" fill="none" stroke="#555" stroke-width="1"/></svg>
</div>
</body></html>
